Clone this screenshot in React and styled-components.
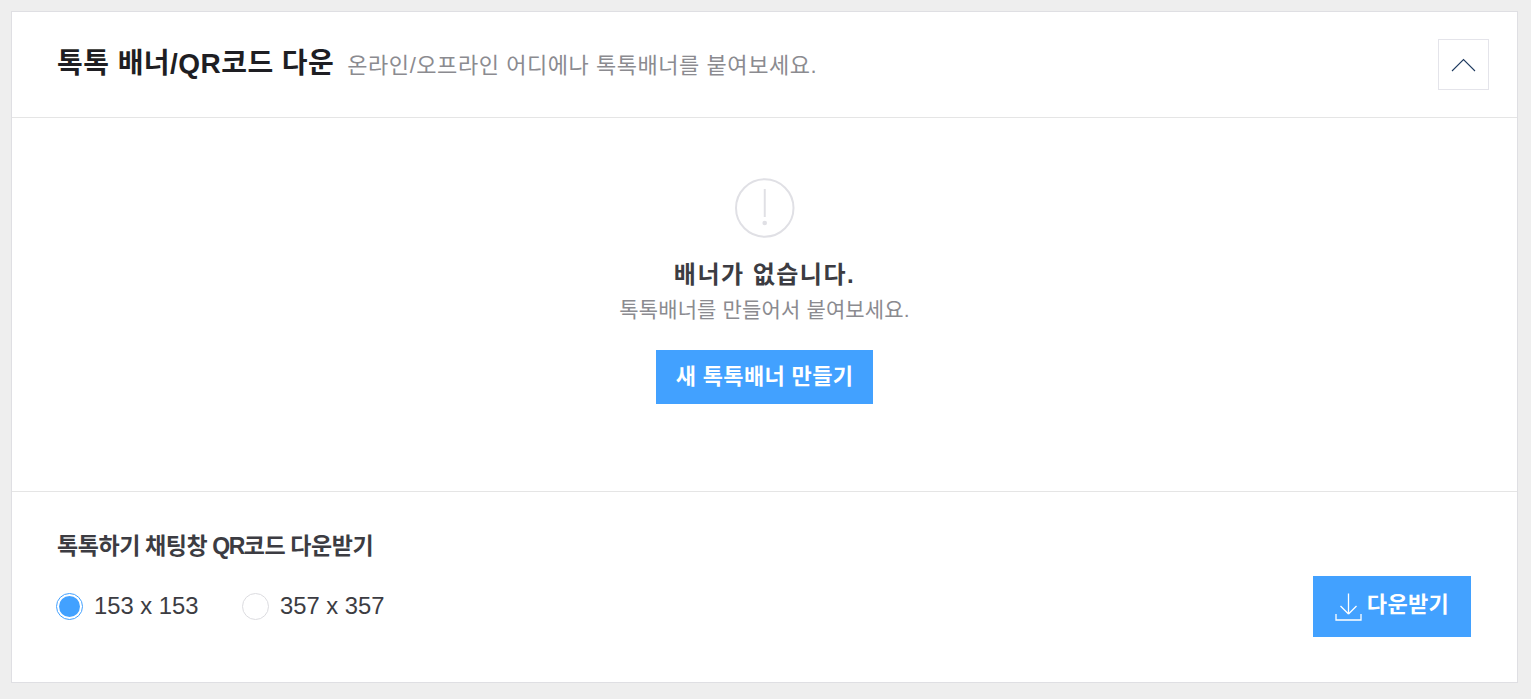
import React from "react";
import styled, { createGlobalStyle } from "styled-components";

const Global = createGlobalStyle`
  html, body { margin: 0; padding: 0; background: #eeeeee; }
  body { font-family: "Liberation Sans", "Noto Sans CJK KR", sans-serif; }
  * { box-sizing: border-box; }
`;

const Page = styled.div`
  padding: 11px 13px 16px 11px;
  height: 699px;
  overflow: hidden;
`;
const Card = styled.section`
  width: 1507px;
  height: 672px;
  background: #fff;
  border: 1px solid #dfdfe3;
  display: flex;
  flex-direction: column;
`;
const Header = styled.header`
  height: 106px;
  flex: none;
  border-bottom: 1px solid #e5e5e5;
  display: flex;
  align-items: center;
  justify-content: space-between;
  padding: 0 28px 0 45px;
`;
const TitleRow = styled.div`
  display: flex;
  align-items: baseline;
  gap: 13px;
  padding-bottom: 8px;
`;
const Title = styled.h2`
  margin: 0;
  font-size: 28px;
  font-weight: 700;
  color: #1e1e23;
  letter-spacing: 0.45px;
`;
const Subtitle = styled.span`
  font-size: 22px;
  color: #8b8b90;
  letter-spacing: 0.55px;
`;
const Toggle = styled.button`
  width: 51px;
  height: 51px;
  padding: 0;
  background: #fff;
  border: 1px solid #e4e4ea;
  display: flex;
  align-items: center;
  justify-content: center;
  cursor: pointer;
`;
const Body = styled.div`
  height: 374px;
  flex: none;
  border-bottom: 1px solid #e5e5e5;
  display: flex;
  flex-direction: column;
  align-items: center;
  padding-top: 60px;
`;
const Heading = styled.h3`
  margin: 20px 0 0;
  font-size: 24px;
  line-height: 34px;
  font-weight: 700;
  color: #3c3c42;
  letter-spacing: 1.5px;
`;
const Hint = styled.p`
  margin: 3px 0 0;
  font-size: 21px;
  line-height: 30px;
  color: #8b8b90;
  letter-spacing: 0.15px;
`;
const PrimaryButton = styled.button`
  height: ${(p) => p.$h}px;
  width: ${(p) => p.$w}px;
  background: #42a1ff;
  border: 0;
  padding: 0;
  color: #fff;
  font: 700 22px "Liberation Sans", "Noto Sans CJK KR", sans-serif;
  letter-spacing: 0.35px;
  display: flex;
  align-items: center;
  justify-content: center;
  gap: 5px;
  cursor: pointer;
`;
const ButtonLabel = styled.span`
  padding-bottom: ${(p) => p.$lift}px;
`;
const CreateWrap = styled.div`
  margin-top: 25px;
`;
const Footer = styled.div`
  flex: 1;
  padding: 35px 46px 0 45px;
`;
const FooterTitle = styled.h4`
  margin: 0;
  font-size: 23px;
  line-height: 38px;
  font-weight: 700;
  color: #3c3c42;
  letter-spacing: -0.4px;
  word-spacing: -1px;
`;
const Latin = styled.span`
  letter-spacing: -1.5px;
`;
const FooterRow = styled.div`
  display: flex;
  align-items: center;
  justify-content: space-between;
  margin-top: 11px;
`;
const Radios = styled.div`
  display: flex;
  align-items: center;
  gap: 43.5px;
  margin: -1px 0 0 -1px;
`;
const RadioLabel = styled.label`
  display: flex;
  align-items: center;
  gap: 11px;
  font-size: 23.8px;
  color: #3c3c42;
`;
const RadioMark = styled.span`
  width: 27px;
  height: 27px;
  border-radius: 50%;
  background: #fff;
  border: 1px solid ${(p) => (p.$on ? "#42a1ff" : "#dcdce0")};
  display: flex;
  align-items: center;
  justify-content: center;
  &::after {
    content: "";
    display: ${(p) => (p.$on ? "block" : "none")};
    width: 21px;
    height: 21px;
    border-radius: 50%;
    background: #42a1ff;
  }
`;

export default function App() {
  return (
    <Page>
      <Global />
      <Card>
        <Header>
          <TitleRow>
            <Title>톡톡 배너/QR코드 다운</Title>
            <Subtitle>온라인/오프라인 어디에나 톡톡배너를 붙여보세요.</Subtitle>
          </TitleRow>
          <Toggle aria-label="접기">
            <svg width="25" height="14" viewBox="0 0 25 14" fill="none">
              <path d="M1 13 L12.5 1.5 L24 13" stroke="#1e3a5f" strokeWidth="1.1" />
            </svg>
          </Toggle>
        </Header>
        <Body>
          <svg width="60" height="60" viewBox="0 0 60 60" fill="none">
            <circle cx="29.75" cy="30" r="28.75" stroke="#e0e0e5" strokeWidth="2" />
            <path d="M29.75 11 V39" stroke="#e0e0e5" strokeWidth="2" />
            <circle cx="29.75" cy="45" r="2.3" fill="#e0e0e5" />
          </svg>
          <Heading>배너가 없습니다.</Heading>
          <Hint>톡톡배너를 만들어서 붙여보세요.</Hint>
          <CreateWrap>
            <PrimaryButton $w={217} $h={54}>
              <ButtonLabel $lift={6}>새 톡톡배너 만들기</ButtonLabel>
            </PrimaryButton>
          </CreateWrap>
        </Body>
        <Footer>
          <FooterTitle>톡톡하기 채팅창 <Latin>QR</Latin>코드 다운받기</FooterTitle>
          <FooterRow>
            <Radios>
              <RadioLabel><RadioMark $on />153 x 153</RadioLabel>
              <RadioLabel><RadioMark />357 x 357</RadioLabel>
            </Radios>
            <PrimaryButton $w={158} $h={61}>
              <svg width="27" height="28" viewBox="0 0 27 28" fill="none">
                <path d="M13.5 0.5 V21 M5.5 13 L13.5 21 M21.5 13 L13.5 21 M1 21 V27 H26 V21" stroke="#fff" strokeWidth="1.3" />
              </svg>
              <ButtonLabel $lift={9}>다운받기</ButtonLabel>
            </PrimaryButton>
          </FooterRow>
        </Footer>
      </Card>
    </Page>
  );
}
